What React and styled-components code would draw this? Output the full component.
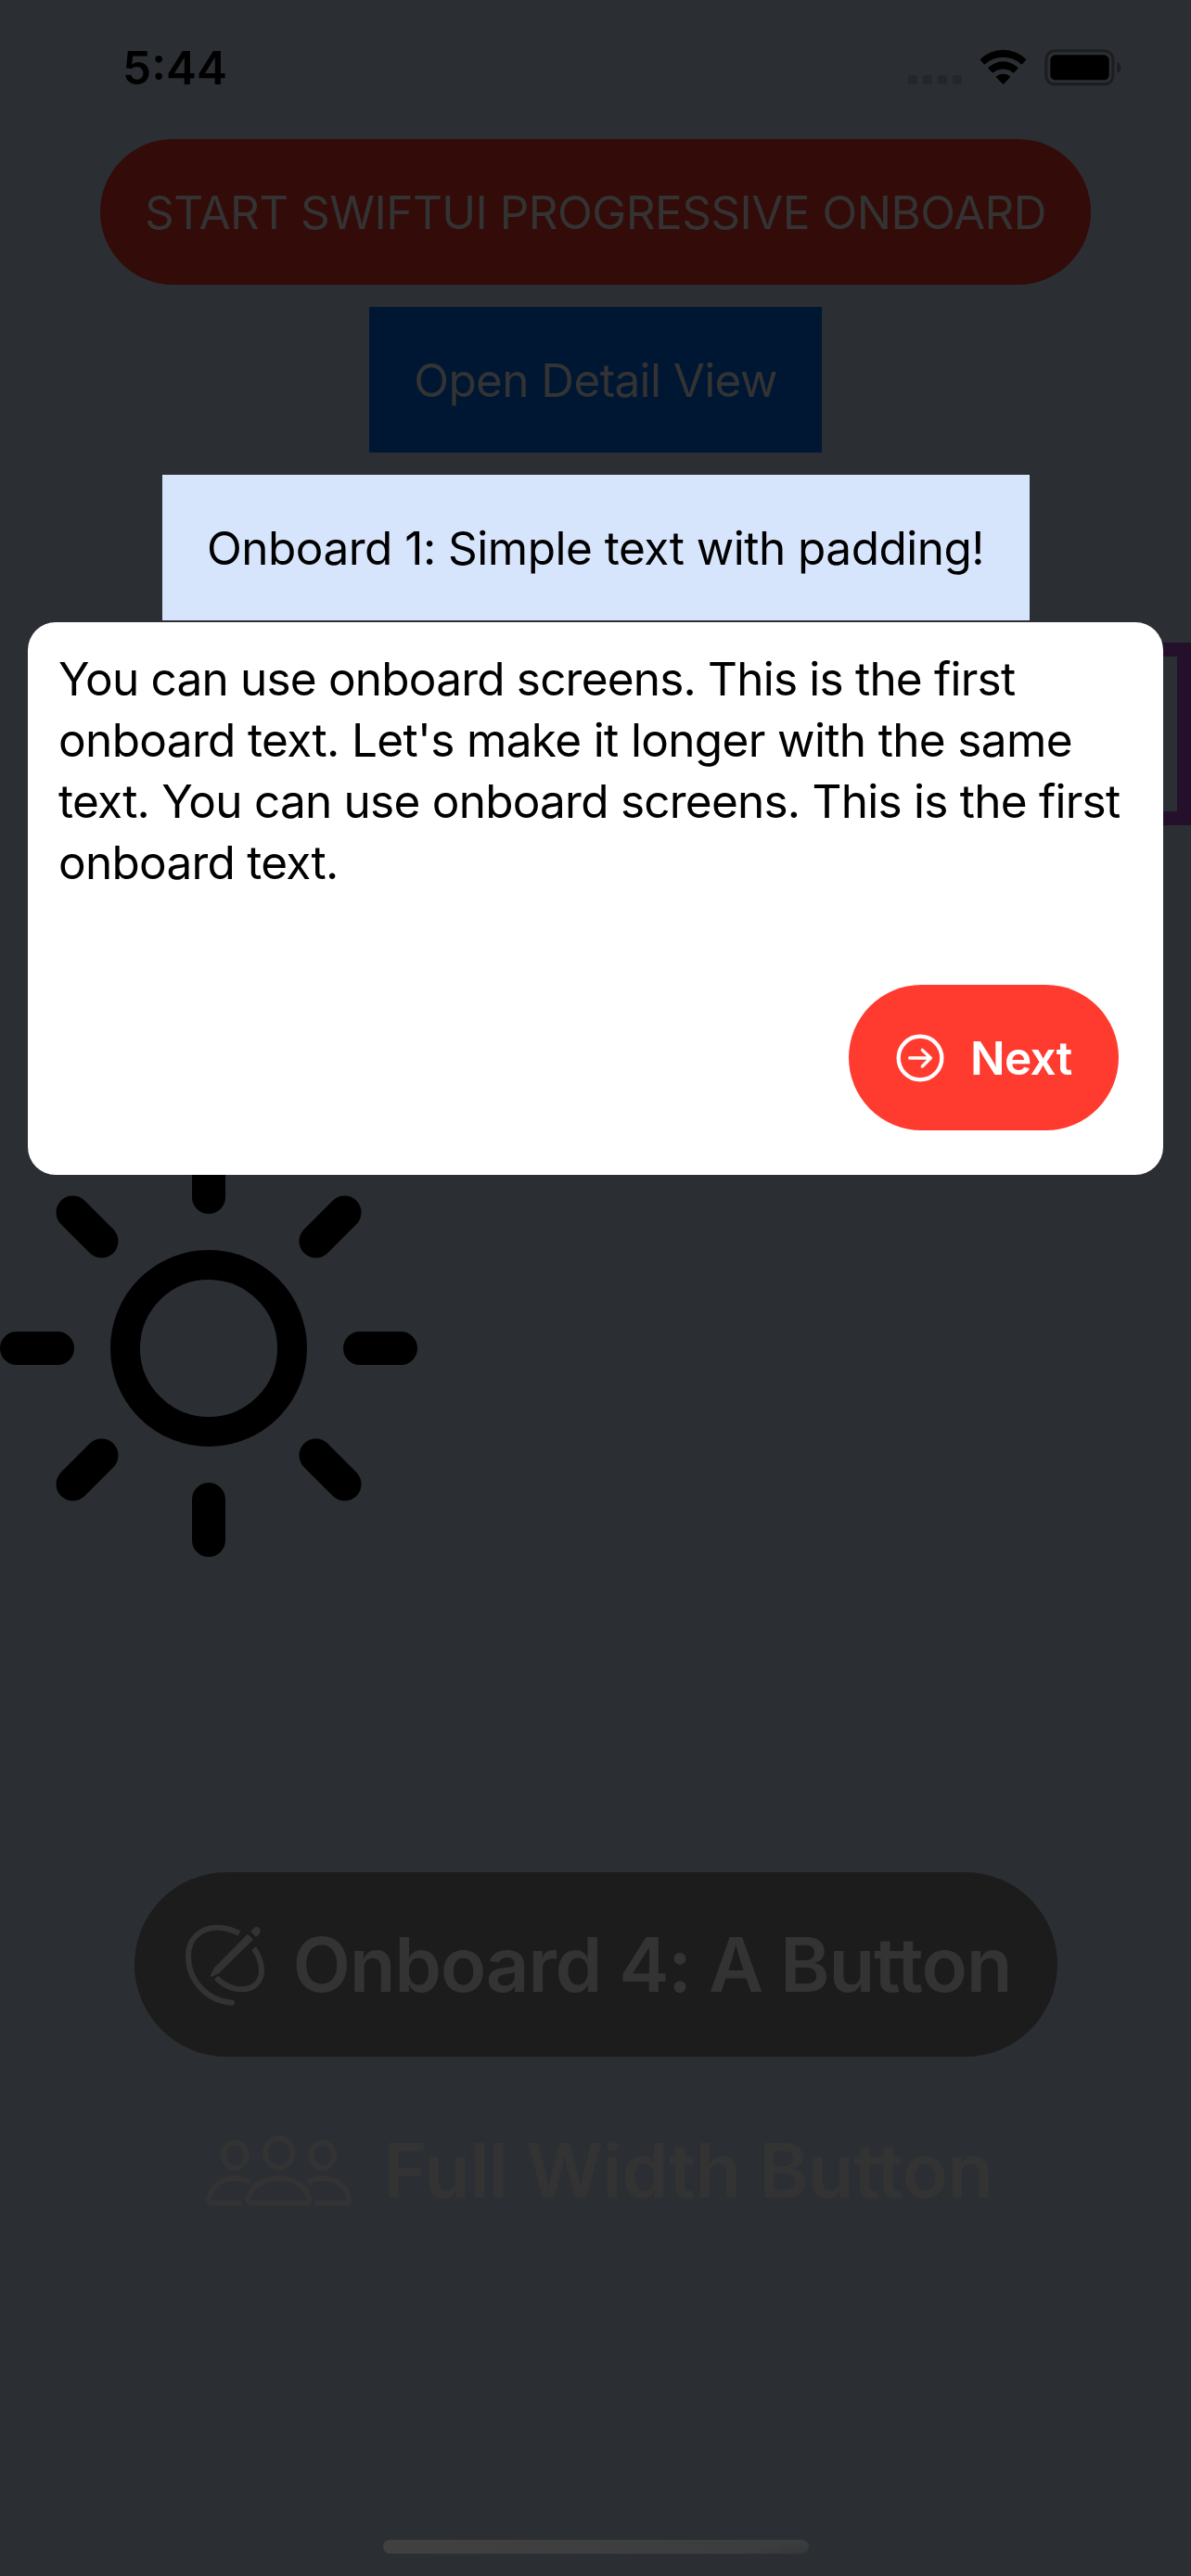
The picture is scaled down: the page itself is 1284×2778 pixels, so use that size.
import React from "react";
import styled, { createGlobalStyle } from "styled-components";

const GlobalStyle = createGlobalStyle`
  * { box-sizing: border-box; }
  html, body { margin: 0; padding: 0; background: #2b2e33; }
  button { border: 0; margin: 0; padding: 0; font: inherit; }
`;

const Screen = styled.main`
  position: relative;
  width: 1284px;
  height: 2778px;
  overflow: hidden;
  display: flex;
  flex-direction: column;
  align-items: center;
  background: #2b2e33;
  font-family: Inter, Roboto, "Liberation Sans", sans-serif;
  font-size: 49.5px;
  color: #000;
`;

const StatusBar = styled.header`
  width: 100%;
  height: 150px;
  padding: 43px 75px 0 132px;
  display: flex;
  justify-content: space-between;
  align-items: flex-start;
`;

const Time = styled.time`
  font-weight: 600;
  line-height: 60px;
`;

const StatusIcons = styled.div`
  height: 60px;
  padding-top: 10px;
  display: flex;
  align-items: flex-start;
  gap: 19px;
`;

const Dots = styled.div`
  display: flex;
  gap: 6px;
  padding-top: 28px;
`;

const Dot = styled.i`
  width: 10px;
  height: 10px;
  border-radius: 3px;
  background: #23272b;
`;

const Tile = styled.button`
  width: ${(p) => p.$width}px;
  height: 157px;
  margin-bottom: 24px;
  flex: none;
  display: flex;
  align-items: center;
  justify-content: center;
  border-radius: ${(p) => (p.$round ? "79px" : "0")};
  background: ${(p) => p.$bg};
  color: ${(p) => p.$color};
`;

const Label = styled.span`
  display: block;
  white-space: nowrap;
  line-height: 60px;
  letter-spacing: ${(p) => p.$tracking}px;
`;

const Frame = styled.div`
  align-self: flex-end;
  width: 1224px;
  height: 197px;
  flex: none;
  margin-bottom: 339px;
  border: 15px solid #24102b;
`;

const SunIcon = styled.svg`
  align-self: flex-start;
  width: 450px;
  height: 450px;
  flex: none;
  margin-bottom: 340px;
`;

const BigButton = styled.button`
  width: ${(p) => p.$width}px;
  height: 199px;
  flex: none;
  margin-bottom: 23px;
  display: flex;
  align-items: center;
  padding-left: ${(p) => p.$inset}px;
  gap: ${(p) => p.$gap}px;
  border-radius: 100px;
  background: ${(p) => p.$bg};
  color: #333333;
  font-size: 81.4px;
  font-weight: 600;
`;

const BigLabel = styled.span`
  white-space: nowrap;
  line-height: 98px;
  letter-spacing: ${(p) => p.$tracking}px;
`;

const HomeIndicator = styled.div`
  width: 459px;
  height: 15px;
  flex: none;
  margin: auto 0 24px;
  border-radius: 8px;
  background: linear-gradient(168deg, #414142 0%, #3c3d3e 85%, #343638 100%);
`;

const Popover = styled.section`
  position: absolute;
  top: 671px;
  left: 30px;
  width: 1224px;
  height: 596px;
  padding: 28px 33px 48px;
  display: flex;
  flex-direction: column;
  justify-content: space-between;
  border-radius: 30px;
  background: #fff;
`;

const Message = styled.p`
  margin: 0;
`;

const Line = styled.span`
  display: block;
  white-space: nowrap;
  line-height: 66px;
  letter-spacing: ${(p) => p.$tracking}px;
`;

const NextButton = styled.button`
  align-self: flex-end;
  width: 291px;
  height: 157px;
  margin-right: 15px;
  padding-left: 51px;
  display: flex;
  align-items: center;
  gap: 28px;
  border-radius: 79px;
  background: #ff3b30;
  color: #fff;
  font-weight: 600;
`;

const Wifi = () => (
  <svg width="51" height="38" viewBox="468 100 153 114" fill="#000">
    <path d="M469.500 134A105 105 0 0 1 619.500 134L606 149Q604 150 602 148A86 86 0 0 0 487 148Q485 150 483 149Z" />
    <path d="M495 161A69 69 0 0 1 594 161L580 176Q578 177.500 576 176A50 50 0 0 0 513 176Q511 177.500 509 176Z" />
    <path d="M521 190A34 34 0 0 1 568 190L547 212Q544.500 214.500 542 212Z" />
  </svg>
);

const Battery = () => (
  <svg width="83" height="40" viewBox="677 98 249 120">
    <rect x="682.500" y="103.500" width="216" height="108" rx="27" fill="none" stroke="#1b1d20" strokeWidth="9" />
    <rect x="696" y="117" width="190" height="81" rx="16" />
    <path d="M912 139Q924 145 924 157Q924 169 912 175Z" fill="#1b1d20" />
  </svg>
);

const Sun = () => (
  <SunIcon viewBox="0 0 450 450" fill="none" stroke="#000" strokeWidth="36" strokeLinecap="round">
    <circle cx="225" cy="225" r="90" strokeWidth="32" />
    <path d="M225 18V62M225 388V432M18 225H62M388 225H432M78.500 78.500L109.500 109.500M371.500 78.500L340.500 109.500M78.500 371.500L109.500 340.500M371.500 371.500L340.500 340.500" />
  </SunIcon>
);

const ArrowCircle = () => (
  <svg width="52" height="52" viewBox="259 283 156 156" fill="none" stroke="#fff" strokeLinecap="round" strokeLinejoin="round">
    <circle cx="337" cy="361" r="70" strokeWidth="13" />
    <path d="M303 361H371M344 335L371 361L344 388" strokeWidth="10" />
  </svg>
);

const PencilOutline = () => (
  <svg width="88" height="90" viewBox="207 226 264 270" fill="none" stroke="#333333" strokeWidth="18">
    <path d="M360 483C280 478 219 412 219 333C219 280 255 240 311 240C338 240 362 247 384 259" />
    <circle cx="360" cy="483" r="9" fill="#333333" stroke="none" />
    <path d="M431 307C447 330 456 352 456 380C456 415 430 440 392 440C362 440 333 427 309 402" />
    <g fill="#333333" stroke="none">
      <path d="M411 261L429 279L318 388L294 399Q290 399 291 395L301 372Z" />
      <path d="M421 252L430 243C436 237 443 237 448 242C454 248 453 255 448 261L438 271Z" />
    </g>
  </svg>
);

const People = () => (
  <svg width="159" height="80" viewBox="273 903 477 240" fill="none" stroke="#333333" strokeWidth="18">
    <ellipse cx="512" cy="965" rx="44" ry="48" />
    <ellipse cx="370" cy="973" rx="37" ry="41" />
    <ellipse cx="653" cy="973" rx="37" ry="41" />
    <path d="M427 1128C412 1128 410 1118 414 1106C426 1072 465 1047 512 1047C559 1047 597 1072 608 1106C612 1118 610 1128 596 1128Z" />
    <path d="M389 1128H300C285 1128 283 1118 287 1106C297 1072 328 1047 370 1047C388 1047 404 1052 418 1060" />
    <path d="M630 1128H724C739 1128 740 1118 737 1106C728 1072 697 1047 653 1047C636 1047 620 1051 606 1060" />
  </svg>
);

const MESSAGE_LINES = [
  { text: "You can use onboard screens. This is the first", tracking: -0.8 },
  { text: "onboard text. Let's make it longer with the same", tracking: -0.65 },
  { text: "text. You can use onboard screens. This is the first", tracking: -0.76 },
  { text: "onboard text.", tracking: -0.75 },
];

export default function App() {
  return (
    <>
      <GlobalStyle />
      <Screen>
        <StatusBar>
          <Time>5:44</Time>
          <StatusIcons>
            <Dots>
              <Dot />
              <Dot />
              <Dot />
              <Dot />
            </Dots>
            <Wifi />
            <Battery />
          </StatusIcons>
        </StatusBar>
        <Tile $width={1068} $bg="#330b08" $color="#333333" $round>
          <Label $tracking={-0.56}>START SWIFTUI PROGRESSIVE ONBOARD</Label>
        </Tile>
        <Tile $width={488} $bg="#001733" $color="#333333">
          <Label $tracking={-0.62}>Open Detail View</Label>
        </Tile>
        <Tile $width={935} $bg="#d7e5fc" $color="#000">
          <Label $tracking={-0.51}>Onboard 1: Simple text with padding!</Label>
        </Tile>
        <Frame />
        <Sun />
        <BigButton $width={995} $bg="#1c1c1c" $inset={54} $gap={29}>
          <PencilOutline />
          <BigLabel $tracking={-1.3}>Onboard 4: A Button</BigLabel>
        </BigButton>
        <BigButton $width={1284} $bg="transparent" $inset={221} $gap={33}>
          <People />
          <BigLabel $tracking={-0.78}>Full Width Button</BigLabel>
        </BigButton>
        <HomeIndicator />
        <Popover>
          <Message>
            {MESSAGE_LINES.map(({ text, tracking }) => (
              <Line key={text} $tracking={tracking}>{text}</Line>
            ))}
          </Message>
          <NextButton>
            <ArrowCircle />
            <Label $tracking={-0.7}>Next</Label>
          </NextButton>
        </Popover>
      </Screen>
    </>
  );
}
